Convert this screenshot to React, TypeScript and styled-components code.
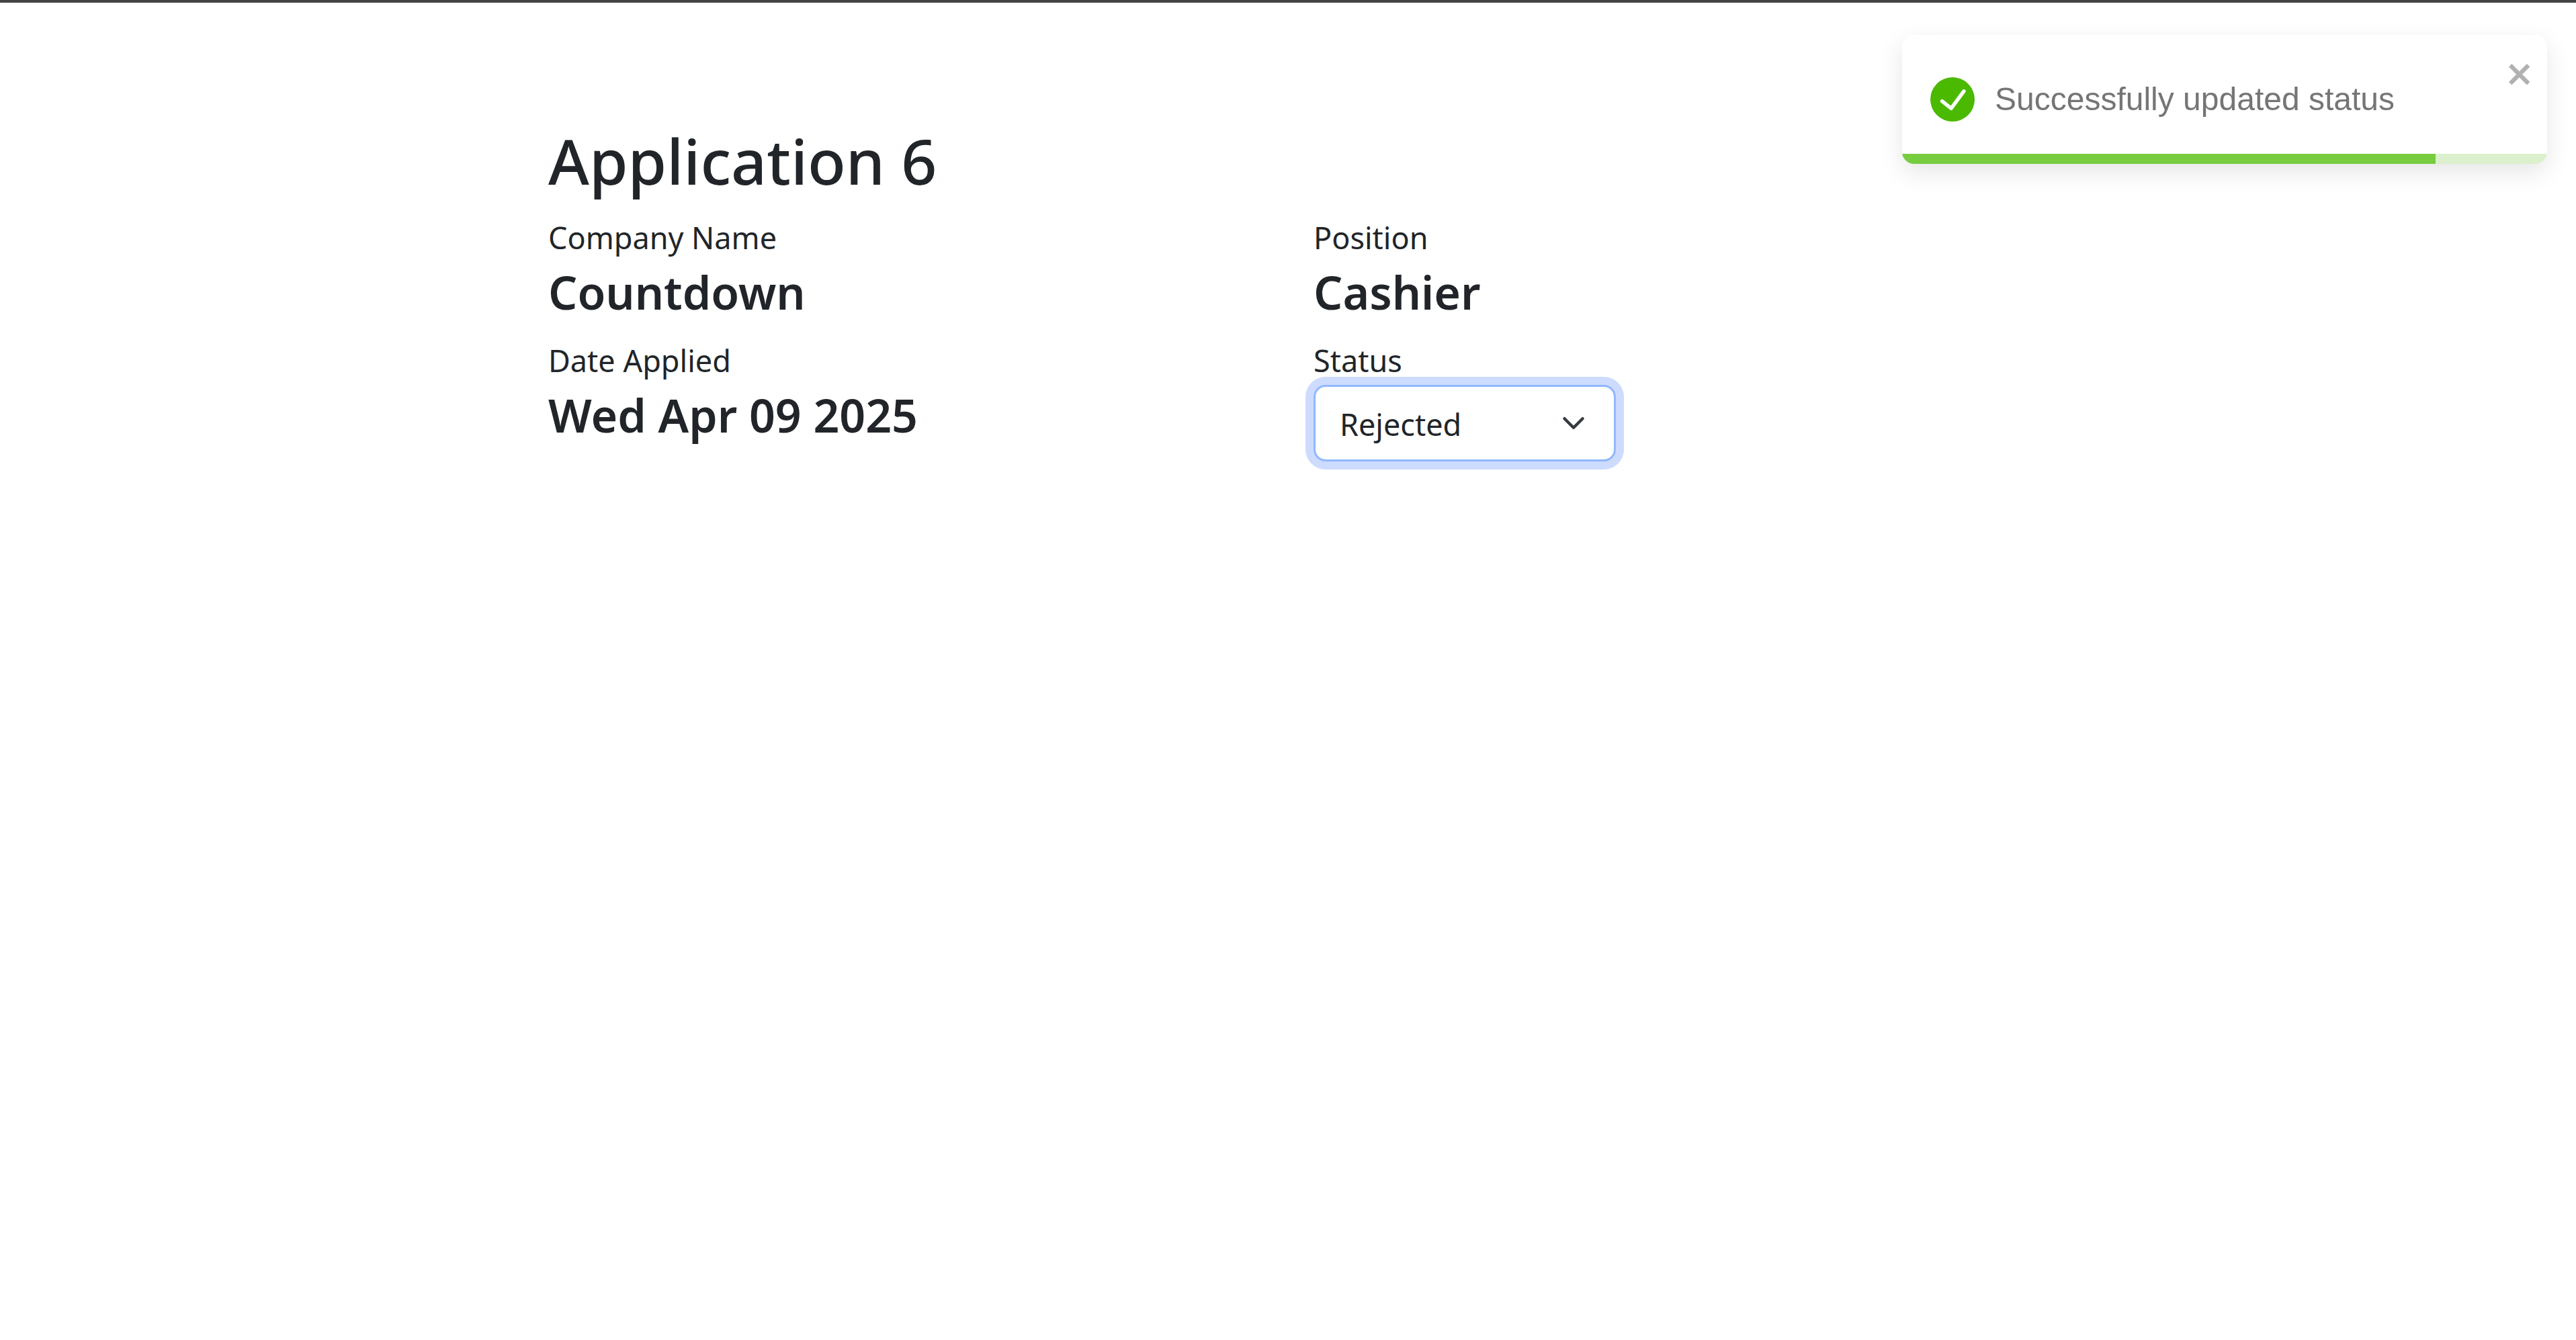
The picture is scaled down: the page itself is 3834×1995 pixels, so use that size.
import React, { useState } from "react";
import styled, { createGlobalStyle } from "styled-components";

const GlobalStyle = createGlobalStyle`
  *, *::before, *::after { box-sizing: border-box; }
  body {
    margin: 0;
    background: #fff;
    color: #212529;
    font-family: "Noto Sans", "Open Sans", sans-serif;
    font-size: 45px;
    line-height: 72px;
  }
`;

const Page = styled.div`
  border-top: 4px solid #434343;
  padding: 178px 36px 48px;
`;

const Container = styled.main`
  max-width: 2202px;
  margin: 0 auto;
`;

const Title = styled.h1`
  margin: 0 0 21px;
  font-size: 93px;
  font-weight: 500;
  line-height: 115px;
`;

const Details = styled.div`
  display: grid;
  grid-template-columns: repeat(2, minmax(0, 1fr));
  column-gap: 76px;
  row-gap: 22px;
`;

const Field = styled.div`
  display: flex;
  flex-direction: column;
  align-items: flex-start;
`;

const Label = styled.label`
  display: block;
`;

const Value = styled.h4`
  margin: 0;
  font-size: 68px;
  font-weight: 600;
  line-height: 89px;
`;

const SelectBox = styled.div`
  position: relative;
  width: 450px;
`;

const Select = styled.select`
  appearance: none;
  display: block;
  width: 100%;
  height: 114px;
  margin: 0;
  padding: 3px 108px 0 36px;
  border: 3px solid #dee2e6;
  border-radius: 18px;
  outline: 0;
  background: #fff;
  color: inherit;
  font: inherit;

  &:focus {
    border-color: #91b8ff;
    box-shadow: 0 0 0 12px #cddbff;
  }
`;

const Chevron = styled.svg`
  position: absolute;
  top: 39px;
  right: 45px;
  width: 36px;
  height: 36px;
  pointer-events: none;
`;

const Toast = styled.div`
  position: fixed;
  top: 52px;
  right: 43px;
  display: flex;
  align-items: center;
  gap: 30px;
  width: 960px;
  min-height: 192px;
  padding: 42px;
  overflow: hidden;
  border-radius: 18px;
  background: #fff;
  box-shadow: 0 12px 36px rgba(0, 0, 0, 0.1);
  color: #757575;
  font-family: "Liberation Sans", Arial, sans-serif;
  font-size: 48px;
`;

const ToastIcon = styled.svg`
  flex: none;
  width: 66px;
  height: 66px;
`;

const CloseButton = styled.button`
  position: absolute;
  top: 34px;
  right: 18px;
  display: flex;
  padding: 0;
  border: 0;
  background: transparent;
  color: #000;
  opacity: 0.3;
  cursor: pointer;

  svg {
    width: 42px;
    height: 48px;
  }
`;

const ProgressTrack = styled.div`
  position: absolute;
  inset: auto 0 0;
  height: 15px;
  background: #dbf0cc;
`;

const ProgressFill = styled.div`
  height: 100%;
  background: #77cc40;
`;

const statuses = ["Applied", "Interview", "Accepted", "Rejected"];

function SuccessToast({ message, remaining, onClose }: { message: string; remaining: number; onClose: () => void }) {
  return (
    <Toast role="alert">
      <ToastIcon viewBox="0 0 24 24" fill="#4bb900" aria-hidden="true">
        <path d="M12 0a12 12 0 1012 12A12.014 12.014 0 0012 0zm6.927 8.2l-6.845 9.289a1.011 1.011 0 01-1.43.188l-4.888-3.908a1 1 0 111.25-1.562l4.076 3.261 6.227-8.451a1 1 0 111.61 1.183z" />
      </ToastIcon>
      <span>{message}</span>
      <CloseButton type="button" aria-label="close" onClick={onClose}>
        <svg viewBox="0 0 14 16" fill="currentColor" aria-hidden="true">
          <path
            fillRule="evenodd"
            d="M7.71 8.23l3.75 3.75-1.48 1.48-3.75-3.75-3.75 3.75L1 11.98l3.75-3.75L1 4.48 2.48 3l3.75 3.75L9.98 3l1.48 1.48-3.75 3.75z"
          />
        </svg>
      </CloseButton>
      <ProgressTrack>
        <ProgressFill style={{ width: `${remaining * 100}%` }} />
      </ProgressTrack>
    </Toast>
  );
}

export default function App() {
  const [status, setStatus] = useState("Rejected");
  const [toastOpen, setToastOpen] = useState(true);

  return (
    <>
      <GlobalStyle />
      <Page>
        <Container>
          <Title>Application 6</Title>
          <Details>
            <Field>
              <span>Company Name</span>
              <Value>Countdown</Value>
            </Field>
            <Field>
              <span>Position</span>
              <Value>Cashier</Value>
            </Field>
            <Field>
              <span>Date Applied</span>
              <Value>Wed Apr 09 2025</Value>
            </Field>
            <Field>
              <Label htmlFor="status">Status</Label>
              <SelectBox>
                <Select id="status" autoFocus value={status} onChange={(e) => setStatus(e.target.value)}>
                  {statuses.map((s) => (
                    <option key={s}>{s}</option>
                  ))}
                </Select>
                <Chevron viewBox="0 0 16 16" aria-hidden="true">
                  <path
                    d="m2 5 6 6 6-6"
                    fill="none"
                    stroke="#343a40"
                    strokeWidth="2"
                    strokeLinecap="round"
                    strokeLinejoin="round"
                  />
                </Chevron>
              </SelectBox>
            </Field>
          </Details>
        </Container>
      </Page>
      {toastOpen && (
        <SuccessToast message="Successfully updated status" remaining={0.827} onClose={() => setToastOpen(false)} />
      )}
    </>
  );
}
